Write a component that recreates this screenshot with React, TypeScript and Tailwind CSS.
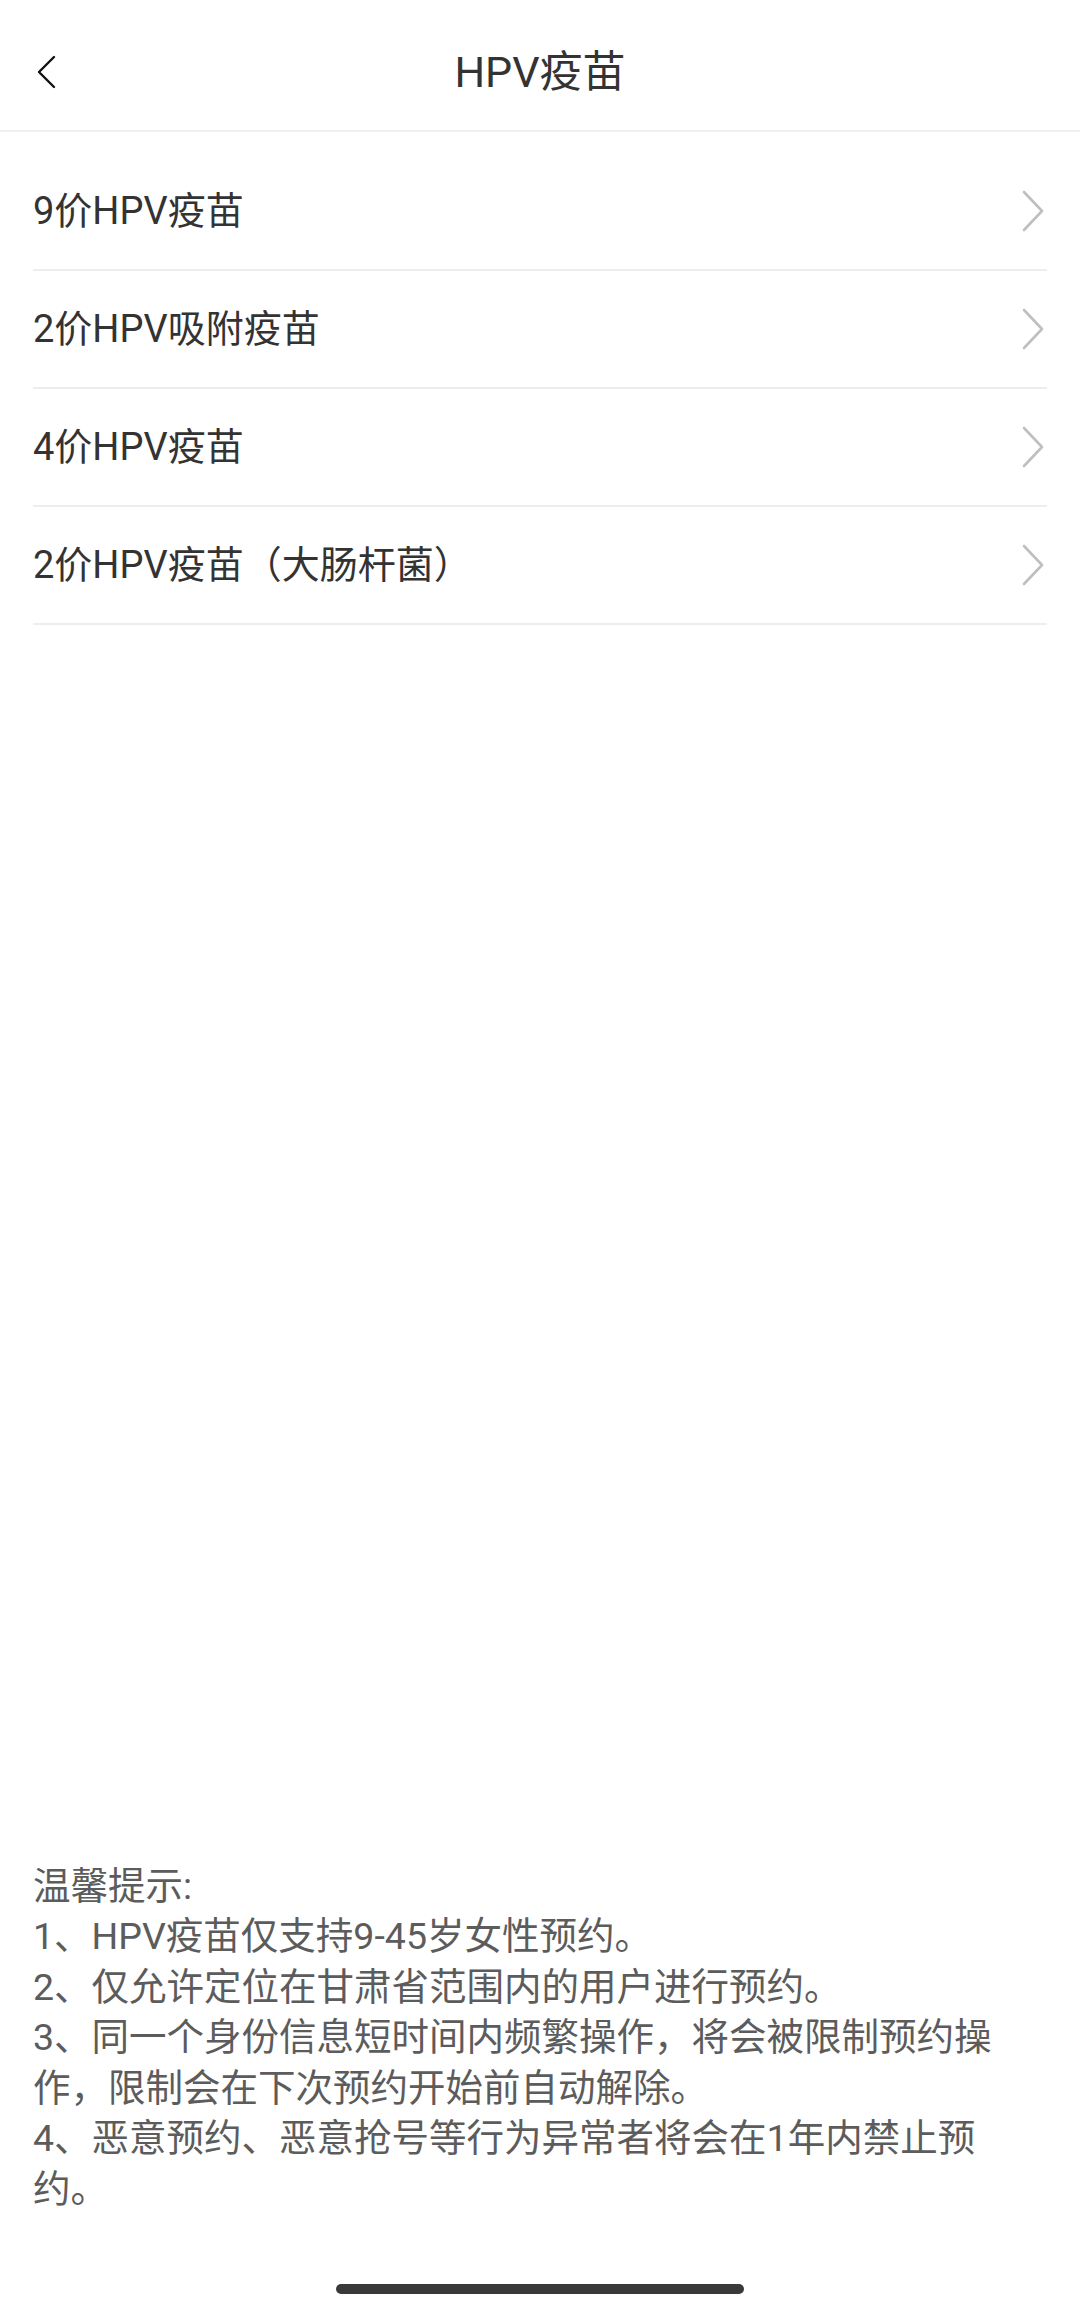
const vaccines = [
  '9价HPV疫苗',
  '2价HPV吸附疫苗',
  '4价HPV疫苗',
  '2价HPV疫苗（大肠杆菌）',
];

const tips = [
  '1、HPV疫苗仅支持9-45岁女性预约。',
  '2、仅允许定位在甘肃省范围内的用户进行预约。',
  '3、同一个身份信息短时间内频繁操作，将会被限制预约操作，限制会在下次预约开始前自动解除。',
  '4、恶意预约、恶意抢号等行为异常者将会在1年内禁止预约。',
];

function RowArrow() {
  return (
    <svg width="24" height="44" viewBox="0 0 24 44" fill="none">
      <path d="M3 3 L21 22 L3 41" stroke="#bfbfbf" strokeWidth="2.6" strokeLinecap="round" strokeLinejoin="round" />
    </svg>
  );
}

function BackArrow() {
  return (
    <svg width="22" height="34" viewBox="0 0 22 34" fill="none">
      <path d="M18 2 L3 17 L18 32" stroke="#111" strokeWidth="2.4" strokeLinecap="round" strokeLinejoin="round" />
    </svg>
  );
}

export default function App() {
  return (
    <div
      className="min-h-[2310px] w-[1080px] bg-white flex flex-col"
      style={{ fontFamily: 'Roboto, "Noto Sans CJK SC", sans-serif' }}
    >
      {/* nav bar */}
      <header className="h-[132px] pt-[14px] grid grid-cols-[1fr_auto_1fr] items-center border-b-2 border-[#efefef]">
        <div className="pl-[36px] flex items-center">
          <BackArrow />
        </div>
        <h1 className="text-[43px] leading-none text-[#333]">HPV疫苗</h1>
        <div />
      </header>

      {/* vaccine list */}
      <ul className="mt-[21px] px-[33px]">
        {vaccines.map(name => (
          <li
            key={name}
            className="h-[118px] flex items-center justify-between border-b-2 border-[#ededed]"
          >
            <span className="text-[38px] leading-none text-[#333]">{name}</span>
            <span className="mr-[2px]">
              <RowArrow />
            </span>
          </li>
        ))}
      </ul>

      {/* tips */}
      <div className="mt-auto pl-[33px] pr-[56px] text-[37.5px] leading-[50.5px] text-[#5c5c5c]">
        <p>温馨提示:</p>
        {tips.map(t => (
          <p key={t}>{t}</p>
        ))}
      </div>

      <div className="pt-[70px] pb-[16px] flex justify-center">
        <div className="w-[408px] h-[10px] rounded-full bg-[#3a3a3a]" />
      </div>
    </div>
  );
}
